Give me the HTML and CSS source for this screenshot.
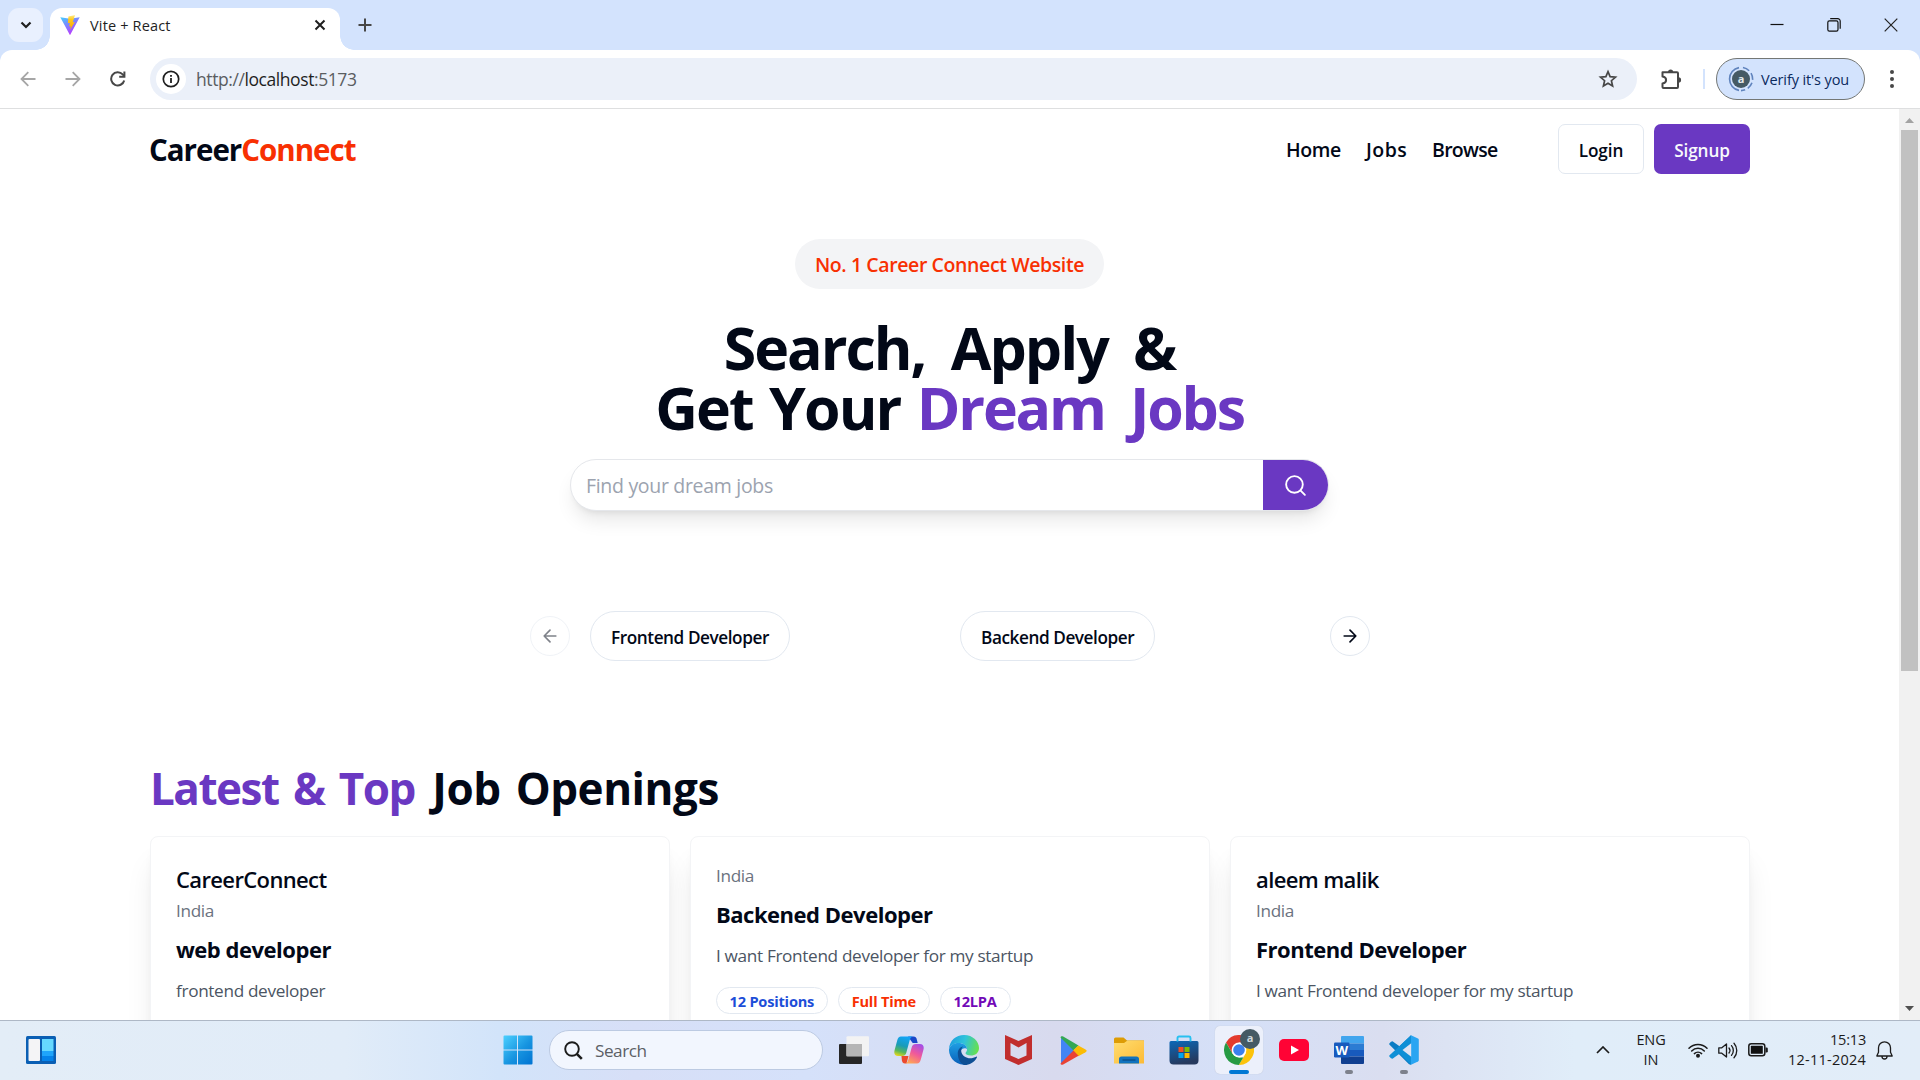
FILE: index.html
```html
<!DOCTYPE html>
<html lang="en">
<head>
<meta charset="utf-8">
<title>Vite + React</title>
<link rel="stylesheet" href="styles.css">
</head>
<body>
<header class="tabstrip">
  <div class="tab-search"><svg width="12" height="8" viewBox="0 0 12 8"><path d="M1.5 1.5 6 6l4.500-4.500" fill="none" stroke="#1f1f1f" stroke-width="2.200"/></svg></div>
  <div class="tab">
    <svg width="20" height="20" viewBox="0 0 20 20">
      <defs>
        <linearGradient id="va" x1="0" y1="0" x2=".6" y2="1"><stop offset="0" stop-color="#41d1ff"/><stop offset="1" stop-color="#bd34fe"/></linearGradient>
        <linearGradient id="vb" x1="0" y1="0" x2="0" y2="1"><stop offset="0" stop-color="#ffea83"/><stop offset=".3" stop-color="#ffc91d"/><stop offset="1" stop-color="#ffa800"/></linearGradient>
      </defs>
      <path d="M.3 2.200 10 3.800l9.700-1.600L10.400 19.500a.4.4 0 0 1-.8 0z" fill="url(#va)"/>
      <path d="m14.300.2-5.900 1.200-.5 6.500 2 .1-.8 3.300 1.600-.1-.5 3.500L14.800 7l-2.100.2L15 .3z" fill="url(#vb)"/>
    </svg>
    <span class="tab-title">Vite + React</span>
    <svg width="12" height="12" viewBox="0 0 12 12"><path d="m1.500 1.500 9 9m0-9-9 9" stroke="#1f1f1f" stroke-width="2"/></svg>
  </div>
  <svg class="new-tab" width="14" height="14" viewBox="0 0 14 14"><path d="M7 .5v13M.5 7h13" stroke="#474747" stroke-width="2"/></svg>
  <div class="window-buttons">
    <svg width="14" height="14" viewBox="0 0 14 14"><path d="M.5 6.500h13" stroke="#111" stroke-width="1.200"/></svg>
    <svg width="14" height="14" viewBox="0 0 14 14"><g fill="none" stroke="#111" stroke-width="1.200"><rect x=".8" y="2.800" width="10.200" height="10.400" rx="1.600"/><path d="M3.200.7h7.500a2.500 2.500 0 0 1 2.500 2.500v7.600"/></g></svg>
    <svg width="14" height="14" viewBox="0 0 14 14"><path d="m.7.7 12.600 12.600m0-12.600L.7 13.300" stroke="#222" stroke-width="1.200"/></svg>
  </div>
</header>

<div class="toolbar">
  <div class="nav-icons">
    <svg width="16" height="16" viewBox="0 0 16 16"><path d="M15.500 8H2M8.300 1.200 1.500 8l6.800 6.800" fill="none" stroke="#a6a6a6" stroke-width="1.800"/></svg>
    <svg width="16" height="16" viewBox="0 0 16 16"><path d="M.5 8H14M7.700 1.200 14.500 8l-6.800 6.800" fill="none" stroke="#a6a6a6" stroke-width="1.800"/></svg>
    <svg width="16" height="16" viewBox="0 0 16 16"><path d="M14.200 9.400A6.600 6.600 0 1 1 12.700 3.400l1.700 1.900" fill="none" stroke="#474747" stroke-width="2"/><path d="M15.400.5v6.200H9.200V4.800h4.200V.5z" fill="#474747"/></svg>
  </div>
  <div class="omnibox">
    <span class="site-info"><svg width="18" height="18" viewBox="0 0 18 18"><circle cx="9" cy="9" r="7.700" fill="none" stroke="#1f1f1f" stroke-width="1.700"/><path d="M9 8v5M9 4.900v1.900" stroke="#1f1f1f" stroke-width="1.800"/></svg></span>
    <span class="url">http://<b>localhost</b>:5173</span>
    <svg width="20" height="20" viewBox="0 0 20 20"><path d="m10 2.600 2.100 5 5.400.5-4.100 3.600 1.200 5.300L10 14.200 5.400 17l1.200-5.300-4.100-3.600 5.400-.5z" fill="none" stroke="#474747" stroke-width="1.700"/></svg>
  </div>
  <svg class="ext" width="22" height="22" viewBox="0 0 22 22"><path d="M2.500 4.300H17a1 1 0 0 1 1 1V19a1 1 0 0 1-1 1H3.500a1 1 0 0 1-1-1v-3.500c4.800-.8 4.800-6.300 0-7z" fill="none" stroke="#474747" stroke-width="2" stroke-linejoin="round"/><path d="M8 4a2.600 2.600 0 0 1 5.200 0zM18.500 9.300a2.600 2.600 0 0 1 0 5.200z" fill="#474747"/></svg>
  <span class="divider"></span>
  <div class="profile">
    <svg width="26" height="26" viewBox="0 0 26 26"><path d="M13 1.400a11.600 11.600 0 0 1 0 23.200" fill="none" stroke="#5f83bd" stroke-width="1.600" stroke-dasharray="7 3" stroke-dashoffset="-2"/><path d="M11 24.400a11.600 11.600 0 0 1 0-22.800" fill="none" stroke="#5f83bd" stroke-width="1.600"/><circle cx="13" cy="13" r="9" fill="#455a64"/><text x="13" y="16.700" text-anchor="middle" class="initial">a</text></svg>
    <span>Verify it's you</span>
  </div>
  <svg class="menu" width="4" height="18" viewBox="0 0 4 18"><g fill="#474747"><circle cx="2" cy="2" r="2"/><circle cx="2" cy="9" r="2"/><circle cx="2" cy="16" r="2"/></g></svg>
</div>

<div class="viewport">
  <main class="page">
    <nav class="navbar">
      <div class="logo">Career<span>Connect</span></div>
      <ul class="links"><li class="l-home">Home</li><li class="l-jobs">Jobs</li><li class="l-browse">Browse</li></ul>
      <button class="btn login">Login</button>
      <button class="btn signup">Signup</button>
    </nav>
    <section class="hero">
      <span class="tagline">No. 1 Career Connect Website</span>
      <h1><span class="line-one">Search, Apply &amp;</span><br><span class="get">Get Your </span><span class="accent dream">Dream Jobs</span></h1>
      <div class="search">
        <span class="placeholder">Find your dream jobs</span>
        <button class="search-btn"><svg width="25" height="25" viewBox="0 0 24 24" fill="none" stroke="#fff" stroke-width="1.800" stroke-linecap="round"><circle cx="11" cy="11" r="8"/><path d="m21 21-4.300-4.300"/></svg></button>
      </div>
    </section>
    <section class="carousel">
      <button class="circle disabled"><svg width="20" height="20" viewBox="0 0 24 24" fill="none" stroke="#020817" stroke-width="2" stroke-linecap="round" stroke-linejoin="round"><path d="m12 19-7-7 7-7M19 12H5"/></svg></button>
      <div class="slides">
        <div><button class="chip">Frontend Developer</button></div>
        <div><button class="chip">Backend Developer</button></div>
      </div>
      <button class="circle"><svg width="20" height="20" viewBox="0 0 24 24" fill="none" stroke="#020817" stroke-width="2" stroke-linecap="round" stroke-linejoin="round"><path d="M5 12h14M12 5l7 7-7 7"/></svg></button>
    </section>
    <section class="jobs">
      <h2><span class="accent latest">Latest &amp; Top </span><span class="openings">Job Openings</span></h2>
      <div class="cards">
        <article class="card">
          <h3>CareerConnect</h3>
          <p class="place">India</p>
          <h4>web developer</h4>
          <p class="desc">frontend developer</p>
        </article>
        <article class="card">
          <p class="place">India</p>
          <h4>Backened Developer</h4>
          <p class="desc">I want Frontend developer for my startup</p>
          <div class="badges"><span class="blue">12 Positions</span><span class="red">Full Time</span><span class="violet">12LPA</span></div>
        </article>
        <article class="card">
          <h3>aleem malik</h3>
          <p class="place">India</p>
          <h4>Frontend Developer</h4>
          <p class="desc">I want Frontend developer for my startup</p>
        </article>
      </div>
    </section>
  </main>
  <div class="scrollbar">
    <svg width="9" height="5" viewBox="0 0 9 5"><path d="M0 5 4.500 0 9 5z" fill="#a3a3a3"/></svg>
    <span class="thumb"></span>
    <svg width="9" height="5" viewBox="0 0 9 5"><path d="M0 0h9L4.500 5z" fill="#505050"/></svg>
  </div>
</div>

<footer class="taskbar">
  <div class="widgets">
    <svg width="30" height="28" viewBox="0 0 30 28"><rect width="30" height="28" rx="1.500" fill="#0a5fb4"/><rect x="2.500" y="3" width="11.500" height="22" rx="1" fill="#f4f4f6"/><rect x="16" y="3" width="11.500" height="12" fill="#66d9ff"/><rect x="16" y="15" width="11.500" height="5" fill="#1fa5fb"/><rect x="16" y="20" width="11.500" height="5" fill="#0583ea"/></svg>
  </div>
  <div class="apps">
    <svg class="start" width="30" height="30" viewBox="0 0 30 30">
      <defs><linearGradient id="win" x1="0" y1="0" x2="1" y2="1"><stop offset="0" stop-color="#4cd0ff"/><stop offset=".55" stop-color="#1794e0"/><stop offset="1" stop-color="#0073d2"/></linearGradient></defs>
      <path d="M1.500.5H14v14H.5v-13a1 1 0 0 1 1-1zM15 .5h13.500a1 1 0 0 1 1 1v13H15zM.5 15.500H14v14H1.500a1 1 0 0 1-1-1zM15 15.500h14.500v13a1 1 0 0 1-1 1H15z" fill="url(#win)"/>
    </svg>
    <div class="task-search">
      <svg width="19" height="19" viewBox="0 0 19 19"><circle cx="8" cy="8" r="6.800" fill="none" stroke="#1b1b1b" stroke-width="1.900"/><path d="m12.800 12.800 5 5" stroke="#1b1b1b" stroke-width="2.600"/></svg>
      <span>Search</span>
    </div>
    <div class="app"><svg width="30" height="28" viewBox="0 0 30 28"><rect y="8" width="23" height="20" rx="1" fill="#262626"/><rect x="7.500" y=".3" width="22.500" height="20" rx="1" fill="#f3f3f3"/><path d="M7.500 8H23v12.300H7.500z" fill="#b5b5b5"/></svg></div>
    <div class="app"><svg width="30" height="28" viewBox="0 0 30 28">
      <defs>
        <linearGradient id="c1" x1=".5" y1="0" x2=".2" y2="1"><stop offset="0" stop-color="#12a4f5"/><stop offset=".45" stop-color="#1a9bb8"/><stop offset=".75" stop-color="#58b75a"/><stop offset="1" stop-color="#e9d81c"/></linearGradient>
        <linearGradient id="c2" x1=".8" y1="0" x2=".3" y2="1"><stop offset="0" stop-color="#a34ee8"/><stop offset=".5" stop-color="#f0599a"/><stop offset="1" stop-color="#ffa654"/></linearGradient>
      </defs>
      <path d="M14 .5h5.500c2 0 2.800 1.300 3.300 3l.9 3.500h-5z" fill="#1947c9"/>
      <path d="M7.500 20h7l-2 7.500h-1.500c-2 0-2.600-1.300-3.100-3z" fill="#ec4a2d"/>
      <path d="M7 .5h12c-2 .4-2.800 1.800-3.400 4L12.500 16c-.6 2.500-1.800 4-4.500 4H4c-3 0-4.300-2.300-3.500-5.500l2.700-10C3.900 1.800 5 .5 7 .5z" fill="url(#c1)"/>
      <path d="M23 27.500H11c2-.4 2.800-1.800 3.400-4L17.500 12c.6-2.500 1.800-4 4.500-4h4c3 0 4.300 2.300 3.500 5.500l-2.700 10c-.7 2.700-1.800 4-3.800 4z" fill="url(#c2)"/>
    </svg></div>
    <div class="app"><svg width="30" height="30" viewBox="0 0 30 30">
      <defs>
        <linearGradient id="e1" x1="0" y1=".3" x2="1" y2=".5"><stop offset="0" stop-color="#1c9de0"/><stop offset=".5" stop-color="#2fc3da"/><stop offset="1" stop-color="#66e04f"/></linearGradient>
        <linearGradient id="e2" x1="0" y1="0" x2="0" y2="1"><stop offset="0" stop-color="#1e9fe4"/><stop offset="1" stop-color="#0a5fb8"/></linearGradient>
      </defs>
      <path d="M0 14C.5 5.500 7 0 15 0c9 0 15 6.500 15 13 0 5-4 7.500-8 7.500-3.500 0-5.500-1.200-5.500-2.300 0-.8 1.500-1.500 1.500-3.700 0-4-4-6.500-8-6.500-5 0-8.500 2.500-10 6z" fill="url(#e1)"/>
      <path d="M0 14.500C1 10.500 4.500 8 9.500 8c4.500 0 8.300 2.300 8.500 6-1-1-5.500-1.500-6.500 2.500-1 5 2 10 6.500 13a15 15 0 0 1-18-15z" fill="url(#e2)"/>
      <path d="M8.800 19C8.500 14.500 11.500 11.800 14 11.500c-3 3-2 7.500 1.500 10 4 2.800 8.500 1.800 11.700.2.600-.3 1 .2.700.7C25.500 27 20.500 30 15.500 30 11.500 29 9 24 8.800 19z" fill="#0e4f94"/>
    </svg></div>
    <div class="app"><svg width="27" height="30" viewBox="0 0 27 30"><path d="m0 0 13.500 6L27 0v24l-13.500 6L0 24zm5.500 8v12.500l8 3.500 8-3.500V8l-8 4.500z" fill="#c12e2e"/></svg></div>
    <div class="app"><svg width="27" height="29" viewBox="0 0 27 29"><path d="M1 1v27L14.500 14.500z" fill="#4285f4"/><path d="M.5 1.500C.8.200 2 0 3.200.6l15.300 9-5 5z" fill="#34a853"/><path d="m18.300 9.400 7.200 4c1.600.9 1.600 1.900 0 2.800l-7.200 4-5.300-5.700z" fill="#fbbc04"/><path d="M.5 27.500c.3 1.300 1.500 1.500 2.700.9l15.300-8.600-5-5.300z" fill="#ea4335"/></svg></div>
    <div class="app"><svg width="30" height="27" viewBox="0 0 30 27"><defs><linearGradient id="f1" x1="0" y1="0" x2="1" y2="1"><stop offset="0" stop-color="#ffdd70"/><stop offset="1" stop-color="#fcba35"/></linearGradient></defs><path d="M0 2a1.500 1.500 0 0 1 1.500-1.500h8L13 3.500h17V10H0z" fill="#dd9c05"/><path d="M0 6h10l3.500-2.500H29a1 1 0 0 1 1 1V26.500H0z" fill="url(#f1)"/><path d="M5 26.500V22a2.500 2.500 0 0 1 2.500-2.500h15A2.500 2.500 0 0 1 25 22v4.500z" fill="#1173be"/><path d="M8.500 23h13" stroke="#0a4c86" stroke-width="1.300"/></svg></div>
    <div class="app"><svg width="30" height="30" viewBox="0 0 30 30"><defs><linearGradient id="s1" x1="0" y1="0" x2=".3" y2="1"><stop offset="0" stop-color="#0b68b8"/><stop offset="1" stop-color="#26395e"/></linearGradient></defs><path d="M.5 7.500A1.500 1.500 0 0 1 2 6h26a1.500 1.500 0 0 1 1.500 1.500v18a4 4 0 0 1-4 4h-21a4 4 0 0 1-4-4z" fill="url(#s1)"/><path d="M8.500 6.500V3A1.500 1.500 0 0 1 10 1.500h10A1.500 1.500 0 0 1 21.500 3v3.500" fill="none" stroke="#28c0f0" stroke-width="1.900"/><path d="M9.500 12h5v5h-5z" fill="#f25022"/><path d="M15.500 12h5v5h-5z" fill="#7fba00"/><path d="M9.500 18h5v5h-5z" fill="#00a4ef"/><path d="M15.500 18h5v5h-5z" fill="#ffb900"/></svg></div>
    <div class="app active">
      <svg width="30" height="30" viewBox="0 0 30 30"><path d="M2 7.500A15 15 0 0 1 28 7.500H15L8.500 18.800z" fill="#e33b2e"/><path d="M28 7.500A15 15 0 0 1 14.800 30l6.700-11.300L22 12l-3-4.500z" fill="#fcc30b"/><path d="M14.800 30A15 15 0 0 1 2 7.500l6.500 11.200 6.500 3.800h4.300z" fill="#269a43"/><circle cx="15" cy="15" r="7.400" fill="#fff"/><circle cx="15" cy="15" r="5.800" fill="#3b80ee"/></svg>
      <span class="avatar">a</span><i class="mark wide"></i>
    </div>
    <div class="app"><svg width="30" height="22" viewBox="0 0 30 22"><rect width="30" height="22" rx="5" fill="#ff0335"/><path d="m12 6.500 8 4.500-8 4.500z" fill="#fff"/></svg></div>
    <div class="app"><svg width="30" height="28" viewBox="0 0 30 28"><path d="M7 1a1 1 0 0 1 1-1h21a1 1 0 0 1 1 1v6.500H7z" fill="#41a5ee"/><path d="M7 7.500h23V14H7z" fill="#2b7cd3"/><path d="M7 14h23v6.500H7z" fill="#185abd"/><path d="M7 20.500h23V27a1 1 0 0 1-1 1H8a1 1 0 0 1-1-1z" fill="#103f91"/><rect y="6.500" width="15.500" height="15" rx="1.200" fill="#185abd"/><text x="7.700" y="18.500" text-anchor="middle" class="word">W</text></svg><i class="mark"></i></div>
    <div class="app"><svg width="30" height="30" viewBox="0 0 30 30"><path d="M22 .3 10.500 11.300 3.500 6.200 2 6.800.3 8.500v1l19.700 19.700 2 .5 1-7L9 12.500 23 7z" fill="#0a7cc4"/><path d="M22 29.700 10.500 18.700l-7 5.100-1.500-.6-1.700-1.700v-1L22 .3 23 8z" fill="#0f8fd6"/><path d="m22 .3 7 3.200a1.500 1.500 0 0 1 .8 1.300v20.400a1.500 1.500 0 0 1-.8 1.300l-7 3.200z" fill="#29a5f2"/><path d="M22.200 8.300v13.400L13.500 15z" fill="#dfe2f2"/></svg><i class="mark"></i></div>
  </div>
  <div class="tray">
    <svg class="up" width="14" height="8" viewBox="0 0 14 8"><path d="m1 7 6-6 6 6" fill="none" stroke="#1b1b1b" stroke-width="1.700"/></svg>
    <div class="lang">ENG<br>IN</div>
    <svg class="wifi" width="20" height="16" viewBox="0 0 20 16"><g fill="none" stroke="#1b1b1b" stroke-width="1.500" stroke-linecap="round"><path d="M1 6.300a12.500 12.500 0 0 1 18 0M3.700 9a8.800 8.800 0 0 1 12.600 0M6.400 11.600a5.200 5.200 0 0 1 7.200 0"/></g><circle cx="10" cy="13.800" r="2" fill="#1b1b1b"/></svg>
    <svg class="sound" width="20" height="17" viewBox="0 0 20 17"><g fill="none" stroke="#1b1b1b" stroke-width="1.300" stroke-linecap="round" stroke-linejoin="round"><path d="M.8 5.800h3L8.500 2v13l-4.700-3.800h-3z"/><path d="M11 6a4 4 0 0 1 0 5M13.500 3.600a7.500 7.500 0 0 1 0 9.800M16 1.200a11 11 0 0 1 0 14.600"/></g></svg>
    <svg class="battery" width="20" height="14" viewBox="0 0 20 14"><rect x=".8" y=".8" width="16" height="12" rx="2.500" fill="none" stroke="#1b1b1b" stroke-width="1.500"/><rect x="2.800" y="2.800" width="12" height="8" rx=".6" fill="#111"/><path d="M17.500 4.500h1a1.300 1.300 0 0 1 1.300 1.300v2.400a1.300 1.300 0 0 1-1.300 1.300h-1z" fill="#1b1b1b"/></svg>
    <div class="clock"><span class="time">15:13</span><span class="date">12-11-2024</span></div>
    <svg class="bell" width="17" height="19" viewBox="0 0 17 19"><path d="M8.500.8a6 6 0 0 0-6 6v4.400L.8 15h15.400l-1.700-3.800V6.800a6 6 0 0 0-6-6zM6 15.500a2.500 2.500 0 0 0 5 0" fill="none" stroke="#1b1b1b" stroke-width="1.300" stroke-linejoin="round"/></svg>
  </div>
</footer>
</body>
</html>
```
FILE: styles.css
```css
* { box-sizing: border-box; margin: 0; padding: 0; }
body {
  width: 1920px; height: 1080px; overflow: hidden;
  display: flex; flex-direction: column;
  font-family: "Open Sans", "Noto Sans", sans-serif;
  background: #d3e3fd; color: #020817;
}
svg { display: block; flex: none; }
button { font: inherit; color: inherit; background: none; border: 0; }
ul { list-style: none; }

/* browser tab strip */
.tabstrip { height: 50px; display: flex; align-items: flex-start; background: #d3e3fd; }
.tab-search { width: 35px; height: 34px; margin: 8px 7px 0 8px; border-radius: 11px; background: #e9f0fe; display: flex; align-items: center; justify-content: center; }
.tab { position: relative; width: 290px; height: 42px; margin-top: 8px; padding: 0 14px 8px 10px; display: flex; align-items: center; background: #fff; border-radius: 12px 12px 0 0; }
.tab::before, .tab::after { content: ""; position: absolute; bottom: 0; width: 14px; height: 14px; }
.tab::before { left: -14px; background: radial-gradient(circle at 0 0, transparent 13.500px, #fff 14px); }
.tab::after { right: -14px; background: radial-gradient(circle at 100% 0, transparent 13.500px, #fff 14px); }
.tab-title { flex: 1; margin-left: 10px; font-size: 14.500px; letter-spacing: .16px; color: #1f1f1f; }
.new-tab { margin: 18px 0 0 18px; }
.window-buttons { margin-left: auto; padding: 18px 22px 0 0; display: flex; gap: 43px; }

.toolbar { height: 59px; display: flex; align-items: center; background: #fff; border-bottom: 1px solid #dedfe0; border-radius: 12px 12px 0 0; }
.nav-icons { display: flex; gap: 29px; margin-left: 20px; width: 130px; }
.omnibox { width: 1487px; height: 42px; border-radius: 21px; background: #ebf0f9; display: flex; align-items: center; padding: 0 19px 0 6px; }
.site-info { width: 30px; height: 30px; border-radius: 50%; background: #fff; display: flex; align-items: center; justify-content: center; }
.url { flex: 1; margin-left: 10px; font-size: 17.500px; letter-spacing: -.42px; color: #5a5d61; }
.url b { font-weight: 400; color: #1f1f1f; }
.ext { margin-left: 23px; }
.divider { width: 2px; height: 20px; margin: 0 11px 0 21px; background: #d3e3fd; }
.profile { width: 149px; height: 42px; border: 1px solid #747775; border-radius: 21px; background: #d3e3fd; display: flex; align-items: center; padding-left: 11px; gap: 7px; font-size: 14.500px; letter-spacing: -.12px; color: #0b2a5e; white-space: nowrap; }
.initial { font: 700 11px "Open Sans", sans-serif; fill: #e4eaec; }
.menu { margin-left: 25px; }

.viewport { height: 911px; display: flex; overflow: hidden; background: #fff; }
.page { width: 1899px; overflow: hidden; }
.scrollbar { width: 21px; height: 911px; background: #f1f1f1; display: flex; flex-direction: column; align-items: center; padding: 9px 0; }
.thumb { width: 17px; height: 541px; margin: 7px 0 auto; background: #c1c1c1; }

/* site navigation */
.navbar { width: 1601px; height: 80px; margin: 0 0 0 149px; display: flex; align-items: center; }
.logo { padding-top: 1px; font-size: 29.500px; font-weight: 700; letter-spacing: -1px; flex: 1; }
.logo span { color: #f83002; }
.links { display: flex; width: 272px; padding-top: 1px; font-size: 19.500px; font-weight: 600; }
.links li { letter-spacing: -.35px; }
.l-home { width: 80px; }
.links .l-jobs { width: 66px; letter-spacing: .45px; }
.links .l-browse { letter-spacing: -.7px; }
.btn { height: 50px; border-radius: 7px; font-size: 17.200px; font-weight: 600; padding-top: 2px; }
.login { width: 86px; border: 1px solid #e2e8f0; letter-spacing: -.1px; }
.signup { width: 96px; margin-left: 10px; background: #6a38c2; color: #f8fafc; letter-spacing: -.1px; }

/* hero */
.hero { width: 1899px; margin-top: 50px; display: flex; flex-direction: column; align-items: center; }
.tagline { width: 309px; height: 50px; padding-top: 1px; border-radius: 25px; background: #f3f4f6; color: #f83002; font-size: 19.500px; font-weight: 600; letter-spacing: -.4px; line-height: 50px; text-align: center; white-space: nowrap; }
h1 { height: 120px; margin: 28px 0 22px; font-size: 59px; line-height: 60px; font-weight: 700; text-align: center; }
.line-one { letter-spacing: -2px; word-spacing: 12px; }
.get { letter-spacing: -1.900px; word-spacing: 3px; }
.accent { color: #6a38c2; }
.dream { letter-spacing: -2.200px; word-spacing: 12px; }
.search { width: 759px; height: 52px; border: 1px solid #e5e7eb; border-radius: 26px; background: #fff; display: flex; overflow: hidden; box-shadow: 0 12.500px 19px -4px rgba(0,0,0,.1), 0 5px 7.500px -5px rgba(0,0,0,.1); }
.placeholder { flex: 1; padding: 1px 0 0 15px; font-size: 19.500px; line-height: 50px; letter-spacing: -.31px; color: #9ca3af; }
.search-btn { width: 65px; background: #6a38c2; display: flex; align-items: center; justify-content: center; }

.carousel { display: flex; align-items: center; margin: 100px 0 0 530px; height: 50px; }
.circle { width: 40px; height: 40px; border: 1px solid #e2e8f0; border-radius: 50%; display: flex; align-items: center; justify-content: center; }
.disabled { opacity: .5; }
.slides { display: grid; grid-template-columns: 370px 370px; margin-left: 20px; }
.chip { height: 50px; padding: 2px 20px 0; border: 1px solid #e2e8f0; border-radius: 25px; font-size: 17.200px; font-weight: 600; letter-spacing: -.43px; white-space: nowrap; }

/* job listing */
.jobs { margin: 101px 0 0 150px; width: 1600px; }
h2 { padding-top: 1px; font-size: 44px; line-height: 50px; font-weight: 700; white-space: pre; }
.latest { letter-spacing: -1.500px; word-spacing: 4.500px; }
.openings { letter-spacing: -.45px; word-spacing: 4px; margin-left: 3px; }
.cards { display: grid; grid-template-columns: repeat(3, 520px); gap: 20px; margin-top: 23px; }
.card { height: 300px; padding: 25px; border: 1px solid #f3f4f6; border-radius: 8px; background: #fff; box-shadow: 0 25px 31px -6px rgba(0,0,0,.1), 0 10px 12.500px -7.500px rgba(0,0,0,.1); }
h3 { font-size: 22px; line-height: 35px; font-weight: 600; letter-spacing: -.63px; }
.place { padding-top: 1px; font-size: 17.200px; line-height: 25px; letter-spacing: -.35px; color: #6b7280; }
h4 { margin-top: 9px; font-size: 22px; line-height: 35px; font-weight: 700; letter-spacing: -.48px; }
.desc { margin-top: 11px; font-size: 17.200px; line-height: 25px; letter-spacing: -.34px; color: #4b5563; }
.badges { display: flex; gap: 10px; margin-top: 19px; }
.badges span { height: 27px; padding: 0 13px 0 12.500px; border: 1px solid #e2e8f0; border-radius: 14px; font-size: 14.600px; line-height: 26px; font-weight: 700; letter-spacing: -.2px; }
.badges .blue { color: #1d4ed8; }
.badges .red { color: #f83002; }
.badges .violet { color: #7209b7; }

/* Windows taskbar */
.taskbar { height: 60px; border-top: 1px solid #aeb8c6; display: flex; align-items: center; background: linear-gradient(90deg, #e3edf7 0, #e1ecf8 18%, #d2e4fa 26%, #d7dff7 33%, #d5e1fa 42%, #d8daee 55%, #d5e0f8 64%, #dadef0 72%, #e0edf9 82%, #e2edf8 100%); }
.widgets { width: 502px; padding: 0 0 1px 26px; }
.apps { display: flex; align-items: center; height: 59px; width: 1093px; padding-bottom: 1px; }
.start { margin-left: 1px; }
.task-search { width: 274px; height: 40px; margin: 0 3px 0 16px; padding-left: 14px; border: 1px solid #bccae2; border-radius: 20px; background: #f2f6fe; display: flex; align-items: center; gap: 12px; font-size: 17.200px; letter-spacing: -.5px; color: #5c5f66; }
.app { position: relative; width: 55px; height: 48px; display: flex; align-items: center; justify-content: center; }
.active { width: 48px; margin: 0 3px 0 4px; border-radius: 5px; background: #ecf0fb; box-shadow: 0 0 1px #b5bccb; }
.avatar { position: absolute; left: 25px; top: 3px; width: 20px; height: 20px; border-radius: 50%; background: #455a64; color: #cfd8dc; font-size: 11px; font-weight: 700; line-height: 18px; text-align: center; }
.mark { position: absolute; bottom: 0; left: 50%; width: 8px; height: 4px; margin-left: -4px; border-radius: 2px; background: #7d818c; }
.wide { width: 20px; margin-left: -10px; background: #0078d4; }
.word { font: 700 13px "Open Sans", sans-serif; fill: #fff; }
.tray { display: flex; align-items: center; padding-bottom: 1px; font-size: 14.500px; line-height: 20px; color: #1b1b1b; }
.up { margin-left: 1px; }
.lang { width: 50px; margin-left: 16px; text-align: center; letter-spacing: -.1px; }
.wifi { margin-left: 12px; }
.sound { margin-left: 10px; }
.battery { margin-left: 10px; }
.clock { width: 98px; display: flex; flex-direction: column; align-items: flex-end; }
.time { letter-spacing: -.2px; }
.date { letter-spacing: .23px; }
.bell { margin-left: 10px; }
```
